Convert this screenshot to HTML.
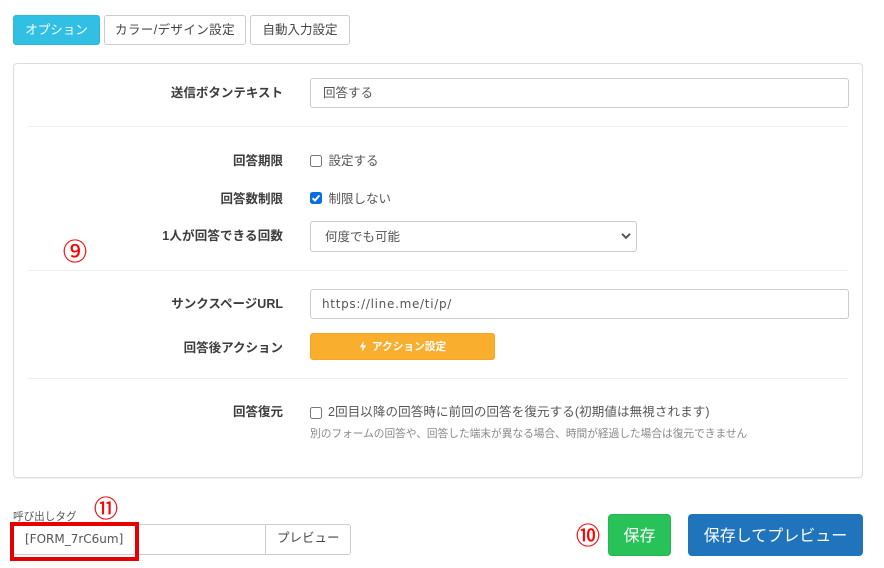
<!DOCTYPE html>
<html lang="ja"><head><meta charset="utf-8"><style>
html,body{margin:0;padding:0;background:#fff}
body{position:relative;width:884px;height:568px;overflow:hidden;font-family:"Liberation Sans","Noto Sans CJK JP",sans-serif;color:#555}
.a{position:absolute;box-sizing:border-box;white-space:nowrap}
.btn{display:flex;align-items:center;justify-content:center;border:1px solid #ccc;border-radius:3px;font-size:12.5px;color:#444;background:#fff;padding-bottom:4px}
.panel{border:1px solid #ddd;border-radius:4px;box-shadow:0 1px 1px rgba(0,0,0,.06)}
.lab{right:601px;font-size:12.5px;font-weight:700;color:#3c3c3c;line-height:16px}
.inp{left:310px;border:1px solid #ccc;border-radius:3px;height:30px;font-size:12.5px;color:#555;display:flex;align-items:center;padding-left:12px;padding-bottom:4px}
.hr{left:28px;width:820px;height:1px;background:#eee}
.t{font-size:12.5px;color:#555;line-height:16px}
.cb{left:310px;width:12px;height:12px;border:1px solid #767676;border-radius:2.5px;background:#fff}
.red{color:#f00;font-family:"Noto Sans CJK JP",sans-serif;line-height:26px;text-align:center;width:26px;height:26px;font-size:24px;-webkit-text-stroke:.3px #f00}
</style></head><body>
<div class="a btn" style="left:13px;top:15px;width:87px;height:30px;background:#31c0e4;border-color:#2db7da;color:#fff">オプション</div>
<div class="a btn" style="left:104px;top:15px;width:142px;height:30px;letter-spacing:.4px">カラー/デザイン設定</div>
<div class="a btn" style="left:250px;top:15px;width:100px;height:30px">自動入力設定</div>

<div class="a panel" style="left:13px;top:63px;width:850px;height:415px"></div>

<div class="a lab" style="top:85px">送信ボタンテキスト</div>
<div class="a inp" style="top:78px;width:539px">回答する</div>
<div class="a hr" style="top:126px"></div>

<div class="a lab" style="top:153px">回答期限</div>
<div class="a cb" style="top:155px"></div>
<div class="a t" style="left:328.5px;top:153px">設定する</div>

<div class="a lab" style="top:191px">回答数制限</div>
<div class="a cb" style="top:192px;background:#0b6fe0;border-color:#0b6fe0"><svg width="10" height="10" viewBox="0 0 10 10" style="display:block"><path d="M1.6 5.2 4 7.5 8.4 2.4" fill="none" stroke="#fff" stroke-width="1.9"/></svg></div>
<div class="a t" style="left:328.5px;top:191px">制限しない</div>

<div class="a lab" style="top:228px;letter-spacing:.15px">1人が回答できる回数</div>
<div class="a inp" style="top:221px;width:327px;height:31px;padding-left:14px;padding-bottom:2px">何度でも可能
<svg width="10" height="8" viewBox="0 0 10 8" style="position:absolute;right:5px;top:10px"><path d="M1 1.8 5 5.8 9 1.8" fill="none" stroke="#555" stroke-width="2"/></svg></div>
<div class="a red" style="left:62px;top:237px">⑨</div>
<div class="a hr" style="top:270px"></div>

<div class="a lab" style="top:296px">サンクスページURL</div>
<div class="a inp" style="top:289px;width:539px;padding-left:11px;padding-bottom:0;font-family:'DejaVu Sans',sans-serif;font-size:12px;letter-spacing:.7px">https://line.me/ti/p/</div>
<div class="a lab" style="top:340px">回答後アクション</div>
<div class="a btn" style="left:310px;top:333px;width:185px;height:27px;background:#faae2e;border-color:#f5a623;color:#fff;font-size:10.7px;font-weight:700;padding-bottom:0"><svg width="8" height="11" viewBox="0 0 8 11" style="margin-right:5px"><path d="M4.8 0 .8 6.2H3.6L2.8 11 7.2 4.4H4.2Z" fill="#fff"/></svg>アクション設定</div>
<div class="a hr" style="top:378px"></div>

<div class="a lab" style="top:404px">回答復元</div>
<div class="a cb" style="top:407px"></div>
<div class="a t" style="left:328px;top:404px;letter-spacing:.12px">2回目以降の回答時に前回の回答を復元する(初期値は無視されます)</div>
<div class="a" style="left:310px;top:426px;font-size:10.7px;line-height:16px;color:#888">別のフォームの回答や、回答した端末が異なる場合、時間が経過した場合は復元できません</div>

<div class="a" style="left:13px;top:510px;font-size:10.6px;line-height:14px;color:#555">呼び出しタグ</div>
<div class="a" style="left:13px;top:524px;width:338px;height:31px;border:1px solid #ccc;border-radius:3px"></div>
<div class="a" style="left:265px;top:524px;width:1px;height:31px;background:#ccc"></div>
<div class="a" style="left:277px;top:530px;font-size:12.5px;line-height:16px;color:#444">プレビュー</div>
<div class="a" style="left:25px;top:531px;font-family:'DejaVu Sans',sans-serif;font-size:12px;line-height:16px;color:#555">[FORM_7rC6um]</div>
<div class="a" style="left:10px;top:522px;width:129px;height:39px;border:4px solid #e60000"></div>
<div class="a red" style="left:93px;top:494px">⑪</div>

<div class="a red" style="left:575px;top:521px">⑩</div>
<div class="a btn" style="left:608px;top:514px;width:63px;height:42px;background:#28c258;border-color:#22b84f;color:#fff;font-size:16px;border-radius:4px;padding-bottom:2px">保存</div>
<div class="a btn" style="left:688px;top:514px;width:175px;height:42px;background:#1f74bb;border-color:#1f74bb;color:#fff;font-size:16px;border-radius:4px;padding-bottom:2px">保存してプレビュー</div>
</body></html>
